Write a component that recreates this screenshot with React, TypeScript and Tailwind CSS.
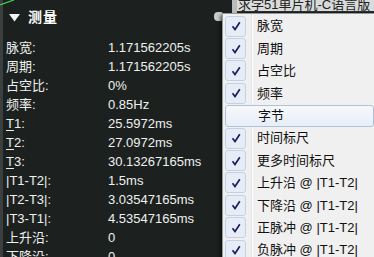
import React from 'react';

const rows: [string, string][] = [
  ['脉宽:', '1.171562205s'],
  ['周期:', '1.171562205s'],
  ['占空比:', '0%'],
  ['频率:', '0.85Hz'],
  ['T1:', '25.5972ms'],
  ['T2:', '27.0972ms'],
  ['T3:', '30.13267165ms'],
  ['|T1-T2|:', '1.5ms'],
  ['|T2-T3|:', '3.03547165ms'],
  ['|T3-T1|:', '4.53547165ms'],
  ['上升沿:', '0'],
  ['下降沿:', '0'],
];

const items: [string, boolean][] = [
  ['脉宽', true],
  ['周期', true],
  ['占空比', true],
  ['频率', true],
  ['字节', false],
  ['时间标尺', true],
  ['更多时间标尺', true],
  ['上升沿 @ |T1-T2|', true],
  ['下降沿 @ |T1-T2|', true],
  ['正脉冲 @ |T1-T2|', true],
  ['负脉冲 @ |T1-T2|', true],
];

const font = { fontFamily: '"Liberation Sans", "Noto Sans CJK SC", sans-serif' };

function Label({ text }: { text: string }) {
  // T1/T2/T3 have underlined first letter
  if (/^T\d:$/.test(text)) {
    return (
      <span>
        <span className="underline underline-offset-2">{text[0]}</span>
        {text.slice(1)}
      </span>
    );
  }
  return <span>{text}</span>;
}

function Check() {
  return (
    <svg width="10" height="10" viewBox="0 0 10 10">
      <path d="M1.5 5.2 L4 8.5 L8.8 1.2" fill="none" stroke="#1b1f5e" strokeWidth="1.7" />
    </svg>
  );
}

export default function App() {
  return (
    <div className="relative w-[374px] h-[257px] overflow-hidden bg-[#1c2120] text-[13px]" style={font}>
      <div className="flex h-full">
        <div className="w-[3px] h-full bg-[#3b403f]" />
        <div className="flex-1 flex flex-col">
          <div className="h-[38px] shrink-0 flex items-center pl-[6px] pb-[3px] text-white">
            <svg width="11" height="8" viewBox="0 0 11 8" className="mr-[8px]">
              <path d="M0 0 H11 L5.5 7.5 Z" fill="#f4f4f4" />
            </svg>
            <span className="text-[14px] font-bold tracking-[1px]">测量</span>
          </div>
          {rows.map(([l, v]) => (
            <div key={l} className="h-[19px] shrink-0 flex items-center text-[#eef0ee]">
              <div className="w-[105px] pl-[3px]"><Label text={l} /></div>
              <div className="whitespace-nowrap">{v}</div>
            </div>
          ))}
        </div>
      </div>

      {/* green trace top-left */}
      <svg className="absolute left-0 top-0" width="16" height="6" viewBox="0 0 16 6">
        <path d="M0 5 L14 0" stroke="#3fd24a" strokeWidth="1.3" />
      </svg>

      {/* small button behind menu */}
      <div className="absolute left-[214px] top-[12px] w-[10px] h-[9px] rounded-sm bg-[#c9cccb]" />

      {/* title bar of window behind */}
      <div className="absolute left-[232px] top-0 w-[5px] h-[13px] bg-[#b8bcbc]" />
      <div className="absolute left-[237px] top-0 right-0 h-[12px] bg-[#d9dbdb] overflow-hidden border-b border-[#2c2f2f]">
        <div className="text-[13px] leading-[13px] -mt-[2px] pl-[1px] text-[#222] whitespace-nowrap">求学51单片机-C语言版</div>
      </div>

      {/* context menu */}
      <div className="absolute left-[222px] top-[13px] right-0 bottom-0 bg-[#f0f0f0] border-l border-t border-[#979797] shadow-[-2px_2px_3px_rgba(0,0,0,0.5)] pt-[1px] pl-[2px]">
        <div className="absolute left-[28px] top-0 bottom-0 w-[1px] bg-[#e2e3e3]" />
        <div className="absolute left-[29px] top-0 bottom-0 w-[1px] bg-white" />
        {items.map(([t, c]) => (
          <div
            key={t}
            className={
              'relative h-[22.4px] shrink-0 flex items-center ' +
              (c ? '' : 'border border-[#aec2dc] rounded-[3px] bg-gradient-to-b from-[#f6f8fb] to-[#e8eef7]')
            }
          >
            <div className="w-[21px] h-[21px] flex items-center justify-center">
              {c && (
                <div className="w-[21px] h-[21px] rounded-[3px] border border-[#c3d1e3] bg-[#e6edf6] flex items-center justify-center">
                  <Check />
                </div>
              )}
            </div>
            <div className="pl-[11px] text-[13px] text-[#111] whitespace-nowrap">{t}</div>
          </div>
        ))}
      </div>
    </div>
  );
}
